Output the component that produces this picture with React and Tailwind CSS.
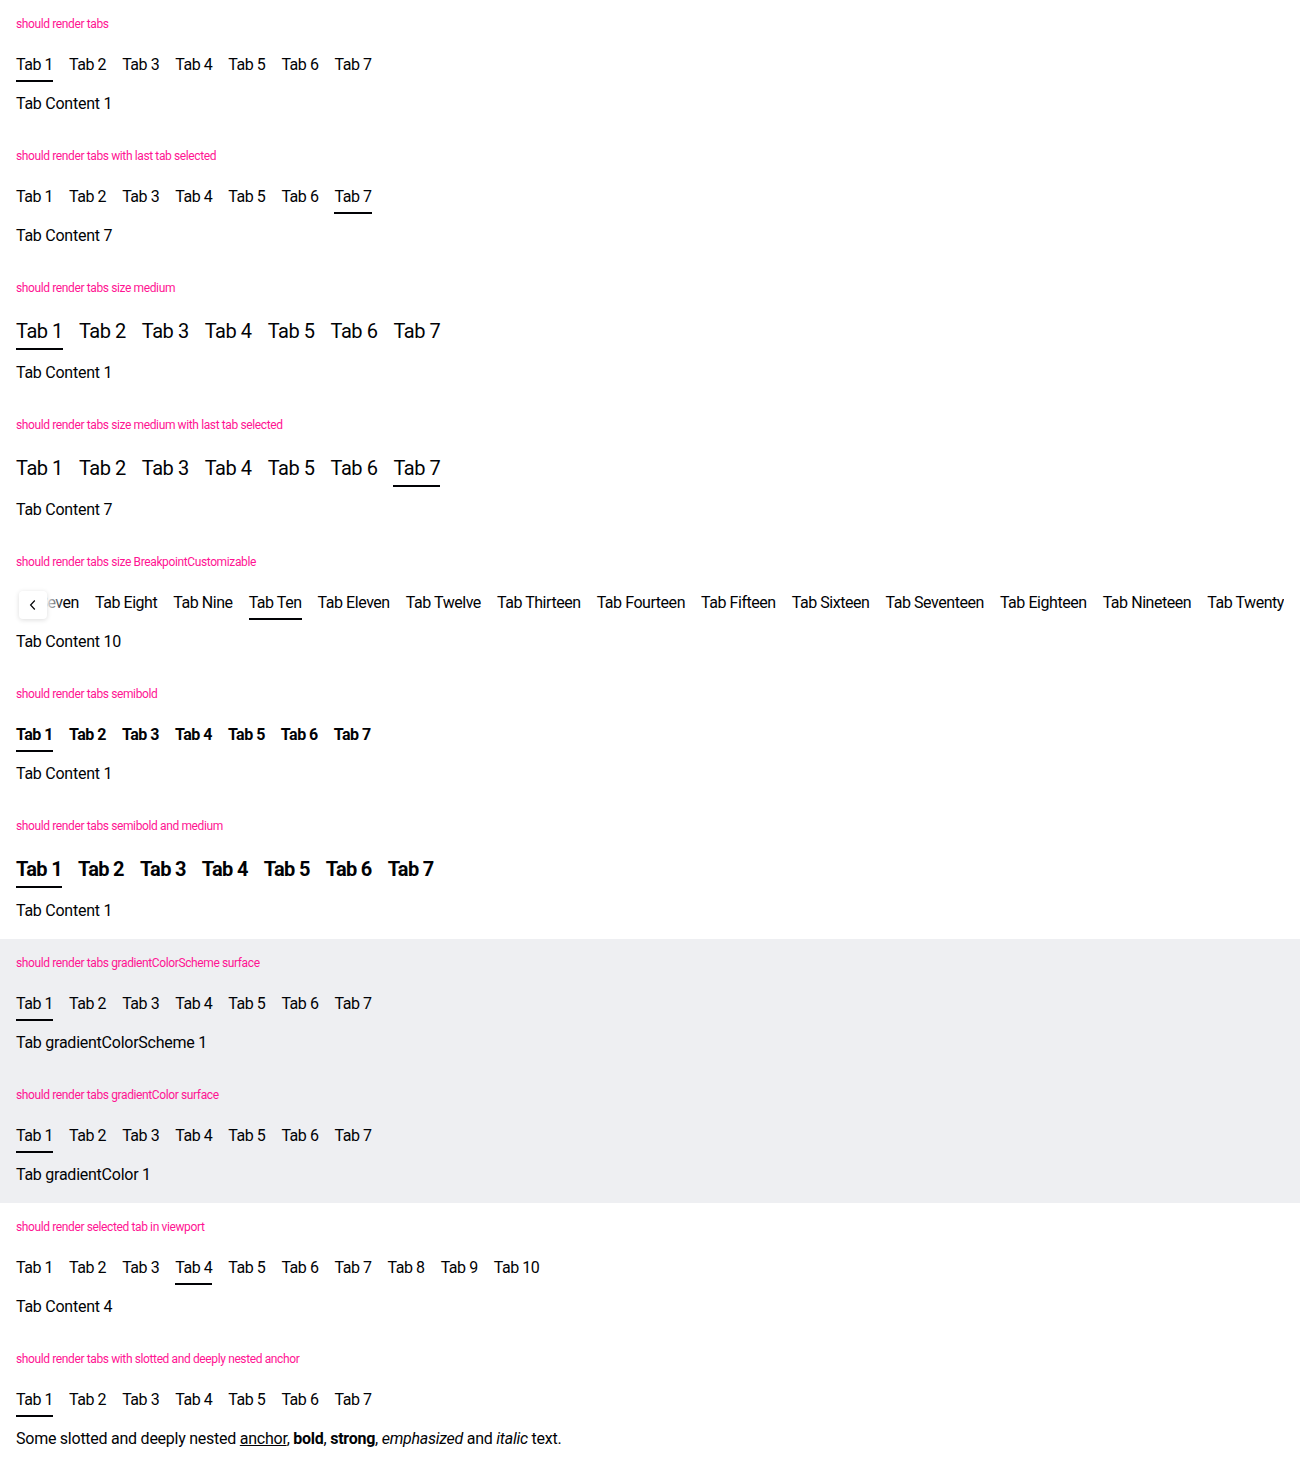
const FONT = "font-['Roboto','Liberation_Sans',sans-serif]";

function Label({ children }) {
  return <p className="text-[12px] leading-4 text-[#ff1493] tracking-[-0.38px]">{children}</p>;
}

function TabsBar({ tabs, active, size = "small", bold = false, scroll = false }) {
  const isMedium = size === "medium";
  let text = "text-[16px] leading-6 tracking-[-0.45px]";
  if (isMedium) text = "text-[20px] leading-7 tracking-[-0.45px]";
  if (bold && !isMedium) text = "text-[16px] leading-6 tracking-[-0.5px]";
  if (bold && isMedium) text = "text-[20px] leading-7 tracking-[-0.68px]";
  const weight = bold ? "font-bold" : "font-normal";
  const row = (
    <div className={`flex gap-4 ${scroll ? "justify-end" : ""}`}>
      {tabs.map((t, i) => (
        <button
          key={t}
          className={`shrink-0 whitespace-nowrap pt-px pb-[3px] border-b-2 ${text} ${weight} text-[#010205] ${
            i === active ? "border-[#010205]" : "border-transparent"
          }`}
        >
          {t}
        </button>
      ))}
    </div>
  );
  if (!scroll) return row;
  return (
    <div className="relative">
      <div className="overflow-hidden">{row}</div>
      <div className="absolute left-0 top-0 h-[30px] w-[48px] bg-gradient-to-r from-white from-60% to-transparent flex items-center">
        <span className="ml-[3px] w-7 h-7 rounded bg-white shadow-[0_1px_5px_rgba(0,0,0,0.14)] flex items-center justify-center">
          <svg width="14" height="14" viewBox="0 0 14 14" fill="none" stroke="#010205" strokeWidth="1.2">
            <path d="M8.8 2.5 4.6 7l4.2 4.5" />
          </svg>
        </span>
      </div>
    </div>
  );
}

function Section({ label, children, content, size, gray }) {
  const isMedium = size === "medium";
  return (
    <div className={`px-4 pt-4 pb-4 ${gray ? "bg-[#eeeff2]" : ""}`}>
      <Label>{label}</Label>
      <div className="mt-5">{children}</div>
      <div className={`${isMedium ? "mt-[11px]" : "mt-2.5"} text-[16px] leading-6 tracking-[-0.25px] text-[#010205]`}>
        {content}
      </div>
    </div>
  );
}

const seven = ["Tab 1", "Tab 2", "Tab 3", "Tab 4", "Tab 5", "Tab 6", "Tab 7"];
const ten = [...seven, "Tab 8", "Tab 9", "Tab 10"];
const words = [
  "One", "Two", "Three", "Four", "Five", "Six", "Seven", "Eight", "Nine", "Ten",
  "Eleven", "Twelve", "Thirteen", "Fourteen", "Fifteen", "Sixteen", "Seventeen",
  "Eighteen", "Nineteen", "Twenty",
].map((w) => `Tab ${w}`);

export default function App() {
  return (
    <div className={`${FONT} bg-white w-[1300px] min-h-[1466px]`}>
      <Section label="should render tabs" content="Tab Content 1">
        <TabsBar tabs={seven} active={0} />
      </Section>
      <Section label="should render tabs with last tab selected" content="Tab Content 7">
        <TabsBar tabs={seven} active={6} />
      </Section>
      <Section label="should render tabs size medium" content="Tab Content 1" size="medium">
        <TabsBar tabs={seven} active={0} size="medium" />
      </Section>
      <Section label="should render tabs size medium with last tab selected" content="Tab Content 7" size="medium">
        <TabsBar tabs={seven} active={6} size="medium" />
      </Section>
      <Section label="should render tabs size BreakpointCustomizable" content="Tab Content 10">
        <TabsBar tabs={words} active={9} scroll />
      </Section>
      <Section label="should render tabs semibold" content="Tab Content 1">
        <TabsBar tabs={seven} active={0} bold />
      </Section>
      <Section label="should render tabs semibold and medium" content="Tab Content 1" size="medium">
        <TabsBar tabs={seven} active={0} size="medium" bold />
      </Section>
      <Section label="should render tabs gradientColorScheme surface" content="Tab gradientColorScheme 1" gray>
        <TabsBar tabs={seven} active={0} />
      </Section>
      <Section label="should render tabs gradientColor surface" content="Tab gradientColor 1" gray>
        <TabsBar tabs={seven} active={0} />
      </Section>
      <Section label="should render selected tab in viewport" content="Tab Content 4">
        <TabsBar tabs={ten} active={3} />
      </Section>
      <Section
        label="should render tabs with slotted and deeply nested anchor"
        content={
          <>
            Some slotted and deeply nested <a className="underline">anchor</a>, <b className="font-bold">bold</b>,{" "}
            <strong className="font-bold">strong</strong>, <em className="italic">emphasized</em> and{" "}
            <i className="italic">italic</i> text.
          </>
        }
      >
        <TabsBar tabs={seven} active={0} />
      </Section>
    </div>
  );
}
